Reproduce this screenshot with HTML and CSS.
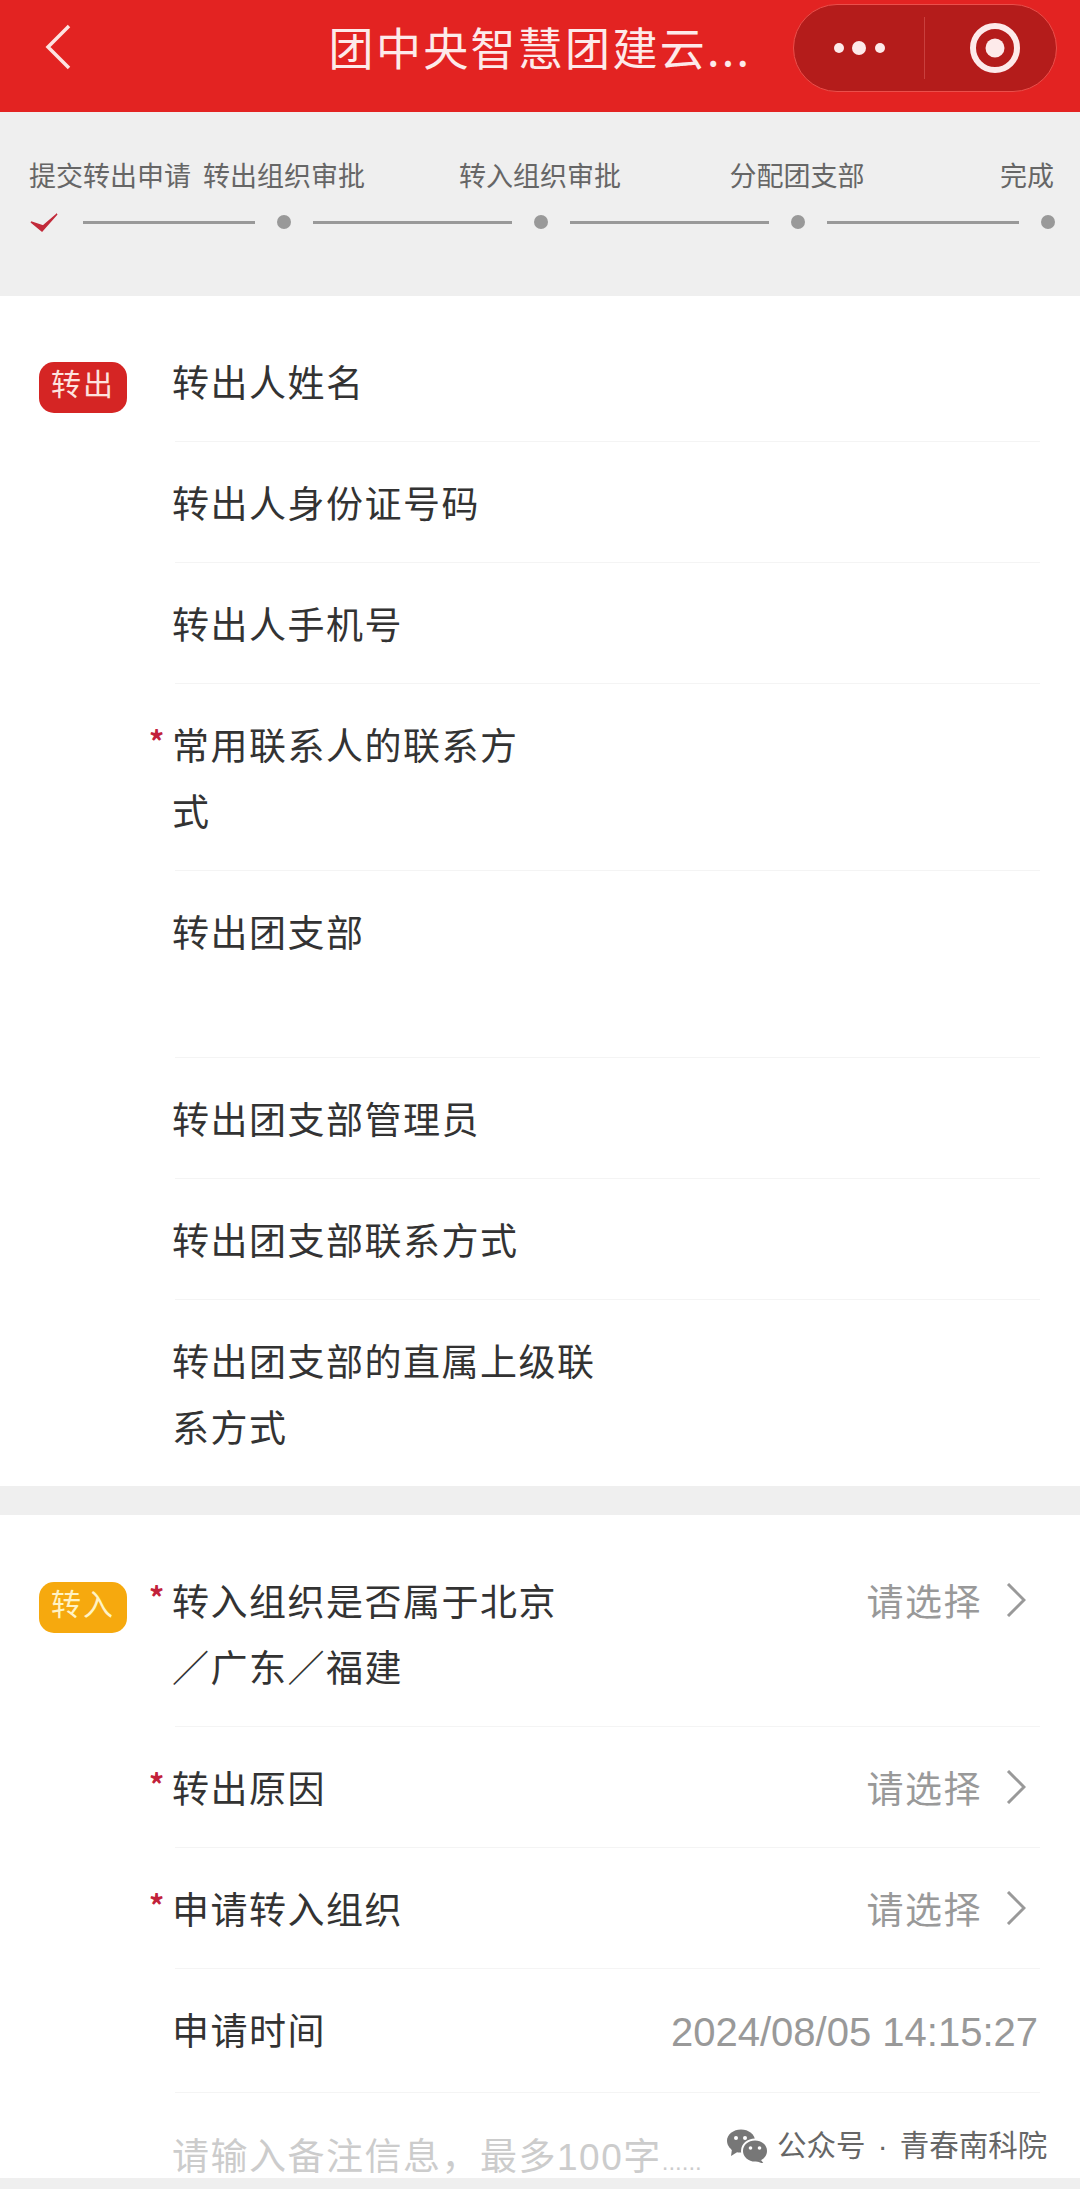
FILE: index.html
```html
<!DOCTYPE html>
<html lang="zh-CN">
<head>
  <meta charset="UTF-8">
  <title>团中央智慧团建云</title>
  <link rel="stylesheet" href="styles.css">
</head>
<body>
  <div class="page">
    <header class="topbar">
      <svg class="back" width="26" height="46" viewBox="0 0 26 46">
        <path d="M24 2 L3 23 L24 44" fill="none" stroke="#fde3e1" stroke-width="3.5"/>
      </svg>
      <div class="title">团中央智慧团建云...</div>
      <div class="capsule">
        <svg class="capsule-more" width="60" height="16" viewBox="0 0 60 16">
          <circle cx="9" cy="8" r="5" fill="#fdeaea"/>
          <circle cx="29" cy="8" r="7" fill="#fdeaea"/>
          <circle cx="50" cy="8" r="5" fill="#fdeaea"/>
        </svg>
        <span class="capsule-divider"></span>
        <svg class="capsule-target" width="52" height="52" viewBox="0 0 52 52">
          <circle cx="26" cy="26" r="22" fill="none" stroke="#fdeaea" stroke-width="6"/>
          <circle cx="26" cy="26" r="9.5" fill="#fdeaea"/>
        </svg>
      </div>
    </header>

    <section class="steps">
      <div class="step-labels">
        <span class="step-label first">提交转出申请</span>
        <span class="step-label">转出组织审批</span>
        <span class="step-label">转入组织审批</span>
        <span class="step-label">分配团支部</span>
        <span class="step-label last">完成</span>
      </div>
      <div class="track">
        <svg class="check" width="27" height="22" viewBox="0 0 27 22">
          <path d="M0 11 L11 20 L26 3 L12 15 Z" fill="#c22a3a" stroke="#c22a3a" stroke-width="1.5"/>
        </svg>
        <span class="line line-first"></span>
        <span class="dot"></span>
        <span class="line"></span>
        <span class="dot"></span>
        <span class="line"></span>
        <span class="dot"></span>
        <span class="line line-last"></span>
        <span class="dot"></span>
      </div>
    </section>

    <section class="panel">
      <div class="badge badge-out">转出</div>
      <div class="rows">
        <div class="row"><div class="label">转出人姓名</div></div>
        <div class="row"><div class="label">转出人身份证号码</div></div>
        <div class="row"><div class="label">转出人手机号</div></div>
        <div class="row"><div class="label required">常用联系人的联系方<br>式</div></div>
        <div class="row"><div class="label tall">转出团支部</div></div>
        <div class="row"><div class="label">转出团支部管理员</div></div>
        <div class="row"><div class="label">转出团支部联系方式</div></div>
        <div class="row"><div class="label">转出团支部的直属上级联<br>系方式</div></div>
      </div>
    </section>

    <section class="panel panel-in">
      <div class="badge badge-in">转入</div>
      <div class="rows">
        <div class="row">
          <div class="label required">转入组织是否属于北京<br>／广东／福建</div>
          <div class="select">请选择
            <svg class="chevron" width="20" height="34" viewBox="0 0 20 34"><path d="M2 1 L18 17 L2 33" fill="none" stroke="#999" stroke-width="3"/></svg>
          </div>
        </div>
        <div class="row">
          <div class="label required">转出原因</div>
          <div class="select">请选择
            <svg class="chevron" width="20" height="34" viewBox="0 0 20 34"><path d="M2 1 L18 17 L2 33" fill="none" stroke="#999" stroke-width="3"/></svg>
          </div>
        </div>
        <div class="row">
          <div class="label required">申请转入组织</div>
          <div class="select">请选择
            <svg class="chevron" width="20" height="34" viewBox="0 0 20 34"><path d="M2 1 L18 17 L2 33" fill="none" stroke="#999" stroke-width="3"/></svg>
          </div>
        </div>
        <div class="row">
          <div class="label">申请时间</div>
          <div class="time">2024/08/05 14:15:27</div>
        </div>
        <div class="row"><div class="label placeholder">请输入备注信息，最多100字<span class="ellipsis">......</span></div></div>
      </div>
    </section>

    <div class="watermark">
      <svg width="42" height="34" viewBox="0 0 42 34">
        <ellipse cx="14" cy="12" rx="14" ry="11.5" fill="#777"/>
        <path d="M5 20 L4 27 L12 22 Z" fill="#777"/>
        <ellipse cx="28" cy="22" rx="13" ry="11.5" fill="#777" stroke="#fff" stroke-width="2"/>
        <path d="M34 31 L37 35 L29 32 Z" fill="#777"/>
        <circle cx="9" cy="9" r="2" fill="#fff"/>
        <circle cx="18" cy="9" r="2" fill="#fff"/>
        <circle cx="23.500" cy="19" r="1.800" fill="#fff"/>
        <circle cx="32.500" cy="19" r="1.800" fill="#fff"/>
      </svg>
      <span>公众号 · 青春南科院</span>
    </div>
  </div>
</body>
</html>
```

FILE: styles.css
```css
:root {
  --red: #e32322;
  --gray-bg: #efefef;
  --text: #333;
  --muted: #999;
  --line: #f4f4f4;
}

html, body {
  margin: 0;
  padding: 0;
}

body {
  font-family: "Noto Sans CJK SC", "Noto Sans", sans-serif;
  color: var(--text);
  background-color: var(--gray-bg);
}

.page {
  position: relative;
  width: 1080px;
  height: 2189px;
  overflow: hidden;
}

/* top bar */
.topbar {
  display: grid;
  grid-template-columns: 1fr auto 1fr;
  align-items: center;
  height: 93px;
  padding-bottom: 19px;
  background-color: var(--red);
}

.back {
  margin-left: 45px;
}

.title {
  font-size: 45px;
  line-height: 60px;
  letter-spacing: 2.3px;
  color: #fdeaea;
}

.capsule {
  justify-self: end;
  display: flex;
  align-items: center;
  box-sizing: border-box;
  width: 264px;
  height: 88px;
  margin-top: 2px;
  margin-right: 23px;
  border: 1px solid #ea4f4b;
  border-radius: 44px;
  background-color: #b41c1b;
}

.capsule-more {
  margin-left: 36px;
}

.capsule-divider {
  width: 1px;
  height: 62px;
  margin-left: 34px;
  background-color: #c9403e;
}

.capsule-target {
  margin-left: 44px;
}

/* steps */
.steps {
  height: 139px;
  padding-top: 45px;
  background-color: var(--gray-bg);
}

.step-labels {
  display: grid;
  grid-template-columns: 174px 162px 350px 164px 175px;
  margin-left: 29px;
  font-size: 27px;
  line-height: 36px;
  color: #666;
}

.step-label {
  text-align: center;
  white-space: nowrap;
}

.step-label.first {
  text-align: left;
}

.step-label.last {
  text-align: right;
}

.track {
  display: flex;
  align-items: center;
  height: 20px;
  margin-top: 19px;
  margin-left: 31px;
}

.check {
  flex: none;
  overflow: visible;
  margin-right: 25px;
}

.line {
  width: 199px;
  height: 3px;
  background-color: #999;
}

.line-first {
  width: 172px;
}

.line-last {
  width: 192px;
}

.dot {
  width: 14px;
  height: 14px;
  margin: 0 22px;
  border-radius: 50%;
  background-color: #999;
}

/* form panels */
.panel {
  display: flex;
  align-items: flex-start;
  padding-top: 25px;
  background-color: #fff;
}

.panel-in {
  height: 638px;
  margin-top: 29px;
  overflow: hidden;
}

.badge {
  flex: none;
  width: 88px;
  height: 51px;
  margin: 41px 0 0 39px;
  border-radius: 15px;
  font-size: 30px;
  line-height: 41px;
  letter-spacing: 2px;
  text-align: center;
}

.badge-out {
  background-color: #d52524;
  color: #fde3df;
}

.badge-in {
  margin-top: 42px;
  background-color: #f6a90e;
  color: #fff3c4;
}

.rows {
  flex: 1;
  margin: 0 40px 0 48px;
}

.row {
  display: flex;
  justify-content: space-between;
  align-items: flex-start;
  padding: 27px 0;
  border-bottom: 1px solid var(--line);
}

.row:last-child {
  border-bottom: 0;
}

.label {
  position: relative;
  margin-left: -3px;
  font-size: 37px;
  line-height: 66px;
  letter-spacing: 1.5px;
  white-space: nowrap;
}

.label.tall {
  min-height: 132px;
}

.label.required::before {
  content: "*";
  position: absolute;
  left: -23px;
  top: -4px;
  font-size: 30px;
  font-weight: 700;
  color: #c2213a;
}

.label.placeholder {
  padding-top: 5px;
  font-family: "Liberation Sans", "Noto Sans CJK SC", sans-serif;
  color: #ccc;
}

.ellipsis {
  font-size: 24px;
  letter-spacing: 0;
}

.select {
  display: flex;
  align-items: center;
  gap: 24px;
  margin-right: 14px;
  font-size: 37px;
  line-height: 66px;
  letter-spacing: 1.500px;
  color: var(--muted);
}

.time {
  margin-right: 2px;
  padding-top: 3px;
  font-family: "Liberation Sans", sans-serif;
  font-size: 40px;
  line-height: 66px;
  color: var(--muted);
}

.watermark {
  position: absolute;
  left: 727px;
  top: 2128px;
  display: flex;
  align-items: center;
  gap: 8px;
  font-family: "Liberation Sans", "Noto Sans CJK SC", sans-serif;
  font-size: 29.5px;
  line-height: 36px;
  word-spacing: 4px;
  white-space: nowrap;
  color: #666;
}
```
